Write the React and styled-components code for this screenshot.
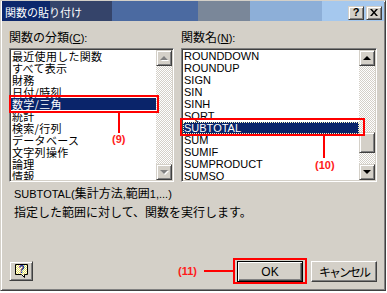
import React from 'react';
import styled, { createGlobalStyle, css } from 'styled-components';

const Global = createGlobalStyle`
  html, body { margin: 0; padding: 0; background: #ffffff; }
  body { font-family: "Noto Sans CJK JP", "Liberation Sans", sans-serif; }
  #root { width: 387px; height: 293px; }
`;

const raised = css`
  background: #d4d0c8;
  box-sizing: border-box;
  border: 1px solid;
  border-color: #d4d0c8 #404040 #404040 #d4d0c8;
  box-shadow: inset 1px 1px #ffffff, inset -1px -1px #808080;
`;

const Dialog = styled.div`
  width: 386px;
  height: 291px;
  box-sizing: border-box;
  background: #d4d0c8;
  border: 1px solid;
  border-color: #d4d0c8 #404040 #404040 #d4d0c8;
  box-shadow: inset 1px 1px #ffffff, inset -1px -1px #808080;
  padding: 0 1px 1px 1px;
  display: flex;
  flex-direction: column;
`;

const TitleBar = styled.div`
  height: 20px;
  box-sizing: border-box;
  padding: 3px 2px 0 3px;
  display: flex;
  align-items: center;
  background: linear-gradient(
    to right,
    #0c276c 0 48px,
    #35446a 48px 110px,
    #4b6aa1 110px 196px,
    #7a8799 196px 248px,
    #8dafd8 248px 320px,
    #a5c8ee 320px
  );
  color: #ffffff;
  font-size: 11px;
  line-height: 13px;
`;

const TitleText = styled.span`
  flex: 1;
  white-space: nowrap;
`;

const TitleButtons = styled.div`
  display: flex;
  gap: 2px;
`;

const CaptionButton = styled.div`
  ${raised};
  width: 16px;
  height: 14px;
  display: flex;
  align-items: center;
  justify-content: center;
  color: #000;
  font: bold 11px/11px "Liberation Sans", sans-serif;
`;

const Body = styled.div`
  flex: 1;
  display: flex;
  flex-direction: column;
  padding: 9px 7px 7px 7px;
`;

const Columns = styled.div`
  display: grid;
  grid-template-columns: 165px 196px;
  column-gap: 7px;
`;

const Column = styled.div`
  display: flex;
  flex-direction: column;
`;

const Label = styled.div`
  font-size: 12px;
  line-height: 14px;
  height: 14px;
  margin-bottom: 4px;
  color: #000;
  white-space: nowrap;
`;

const Lat = styled.span`
  font-family: "Liberation Sans", Arial, sans-serif;
  font-size: 11px;
`;

const Key = styled.span`
  text-decoration: underline;
`;

const ListBox = styled.div`
  position: relative;
  height: 134px;
  box-sizing: border-box;
  border: 1px solid;
  border-color: #808080 #ffffff #ffffff #808080;
  box-shadow: inset 1px 1px #404040, inset -1px -1px #d4d0c8;
  background: #ffffff;
  padding: 1px;
  display: flex;
`;

const Items = styled.div`
  flex: 1;
  overflow: hidden;
  display: flex;
  flex-direction: column;
`;

const Item = styled.div`
  height: 12px;
  flex: none;
  line-height: 12px;
  padding-left: 1px;
  white-space: nowrap;
  color: #000;
  ${p => p.$latin
    ? css`font: 11px/12px "Liberation Sans", Arial, sans-serif;`
    : css`font-size: 11px; letter-spacing: 0.3px;`}
  ${p => p.$selected && css`
    background: #0a246a;
    color: #ffffff;
  `}
  ${p => p.$focus && css`
    outline: 1px dotted #fff8c0;
    outline-offset: -1px;
  `}
`;

const ScrollBar = styled.div`
  width: 16px;
  flex: none;
  display: flex;
  flex-direction: column;
`;

const ScrollButton = styled.div`
  ${raised};
  width: 16px;
  height: 16px;
  flex: none;
  display: flex;
  align-items: center;
  justify-content: center;
`;

const Arrow = styled.div`
  width: 0;
  height: 0;
  border-left: 4px solid transparent;
  border-right: 4px solid transparent;
  ${p => p.$dir === 'up'
    ? css`border-bottom: 4px solid ${p.$disabled ? '#808080' : '#000'};`
    : css`border-top: 4px solid ${p.$disabled ? '#808080' : '#000'};`}
  ${p => p.$disabled && css`filter: drop-shadow(1px 1px 0 #ffffff);`}
`;

const Track = styled.div`
  flex: 1;
  background: repeating-conic-gradient(#d4d0c8 0 25%, #ffffff 0 50%) 0 0 / 2px 2px;
  display: flex;
  flex-direction: column;
`;

const Thumb = styled.div`
  ${raised};
  width: 16px;
  height: 21px;
  margin-top: ${p => p.$offset}px;
`;

const RedBox = styled.div`
  position: absolute;
  left: ${p => p.$x}px;
  top: ${p => p.$y}px;
  width: ${p => p.$w}px;
  height: ${p => p.$h}px;
  box-sizing: border-box;
  border: 2px solid #ff0000;
  pointer-events: none;
`;

const RedLine = styled.div`
  position: absolute;
  left: ${p => p.$x}px;
  top: ${p => p.$y}px;
  width: ${p => p.$w}px;
  height: ${p => p.$h}px;
  background: #ff0000;
`;

const RedTag = styled.div`
  position: absolute;
  left: ${p => p.$x}px;
  top: ${p => p.$y}px;
  font: bold 11px/12px "Liberation Sans", Arial, sans-serif;
  color: #ff1a1a;
  white-space: nowrap;
`;

const Description = styled.div`
  margin-top: 2px;
  padding-left: 5px;
  font-size: 12px;
  line-height: 18px;
  color: #000;
  white-space: nowrap;
`;

const Footer = styled.div`
  margin-top: auto;
  display: flex;
  align-items: flex-start;
`;

const HelpButton = styled.div`
  ${raised};
  width: 24px;
  height: 20px;
  display: flex;
  align-items: center;
  justify-content: center;
  padding-left: 2px;
`;

const Spacer = styled.div`
  flex: 1;
`;

const OkWrap = styled.div`
  position: relative;
  margin-right: 8px;
`;

const PushButton = styled.div`
  width: 66px;
  height: 21px;
  box-sizing: border-box;
  background: #d4d0c8;
  display: flex;
  align-items: center;
  justify-content: center;
  color: #000;
  border: 1px solid;
  border-color: #ffffff #404040 #404040 #ffffff;
  box-shadow: inset -1px -1px #808080;
  ${p => p.$latin
    ? css`font: 12px/14px "Liberation Sans", Arial, sans-serif;`
    : css`font-size: 12px; line-height: 14px; letter-spacing: -2px;`}
  ${p => p.$default && css`
    border-color: #000;
    box-shadow: inset 1px 1px #ffffff, inset -1px -1px #404040, inset -2px -2px #808080;
  `}
`;

const categories = [
  '最近使用した関数', 'すべて表示', '財務', '日付/時刻', '数学/三角', '統計',
  '検索/行列', 'データベース', '文字列操作', '論理', '情報',
];

const functions = [
  'ROUNDDOWN', 'ROUNDUP', 'SIGN', 'SIN', 'SINH', 'SQRT', 'SUBTOTAL',
  'SUM', 'SUMIF', 'SUMPRODUCT', 'SUMSQ',
];

function CloseGlyph() {
  return (
    <svg width="8" height="7" viewBox="0 0 8 7">
      <path d="M0 0h2l2 2.5L6 0h2L5 3.5 8 7H6L4 4.5 2 7H0l3-3.5z" fill="#000" />
    </svg>
  );
}

function HelpIcon() {
  return (
    <svg width="14" height="15" viewBox="0 0 14 15">
      <defs>
        <pattern id="dots" width="2" height="2" patternUnits="userSpaceOnUse">
          <rect width="2" height="2" fill="#ffffff" />
          <rect width="1" height="1" fill="#e8e060" />
          <rect x="1" y="1" width="1" height="1" fill="#e8e060" />
        </pattern>
      </defs>
      <path d="M0.5 0.5H12.5V10.5H9.5V13.5L6.5 10.5H0.5Z" fill="url(#dots)" stroke="#000" />
      <text x="6.5" y="9" fontSize="10" fontWeight="bold" textAnchor="middle"
        fill="#1a2a9a" fontFamily="Liberation Sans, sans-serif">?</text>
    </svg>
  );
}

function Scroll({ disabled, thumb }) {
  return (
    <ScrollBar>
      <ScrollButton><Arrow $dir="up" $disabled={disabled} /></ScrollButton>
      <Track>{thumb != null && <Thumb $offset={thumb} />}</Track>
      <ScrollButton><Arrow $dir="down" $disabled={disabled} /></ScrollButton>
    </ScrollBar>
  );
}

export default function App() {
  return (
    <>
      <Global />
      <Dialog>
        <TitleBar>
          <TitleText>関数の貼り付け</TitleText>
          <TitleButtons>
            <CaptionButton>?</CaptionButton>
            <CaptionButton><CloseGlyph /></CaptionButton>
          </TitleButtons>
        </TitleBar>
        <Body>
          <Columns>
            <Column>
              <Label>関数の分類<Lat>(<Key>C</Key>):</Lat></Label>
              <ListBox>
                <Items>
                  {categories.map((c, i) => (
                    <Item key={c} $selected={i === 4}>{c}</Item>
                  ))}
                </Items>
                <Scroll disabled />
                <RedBox $x={-1} $y={46} $w={150} $h={18} />
                <RedLine $x={108} $y={64} $w={2} $h={20} />
                <RedTag $x={102} $y={84}>(9)</RedTag>
              </ListBox>
            </Column>
            <Column>
              <Label>関数名<Lat>(<Key>N</Key>):</Lat></Label>
              <ListBox>
                <Items>
                  {functions.map((f, i) => (
                    <Item key={f} $latin $selected={i === 6} $focus={i === 6}>{f}</Item>
                  ))}
                </Items>
                <Scroll thumb={66} />
                <RedBox $x={-2} $y={69} $w={185} $h={18} />
                <RedLine $x={141} $y={87} $w={2} $h={22} />
                <RedTag $x={133} $y={110}>(10)</RedTag>
              </ListBox>
            </Column>
          </Columns>
          <Description>
            <div><Lat>SUBTOTAL(</Lat>集計方法<Lat>,</Lat>範囲<Lat>1,...)</Lat></div>
            <div>指定した範囲に対して、関数を実行します。</div>
          </Description>
          <Footer>
            <HelpButton><HelpIcon /></HelpButton>
            <Spacer />
            <OkWrap>
              <PushButton $latin $default>OK</PushButton>
              <RedBox $x={-4} $y={-3} $w={74} $h={26} />
              <RedLine $x={-33} $y={9} $w={29} $h={2} />
              <RedTag $x={-59} $y={4}>(11)</RedTag>
            </OkWrap>
            <PushButton>キャンセル</PushButton>
          </Footer>
        </Body>
      </Dialog>
    </>
  );
}
